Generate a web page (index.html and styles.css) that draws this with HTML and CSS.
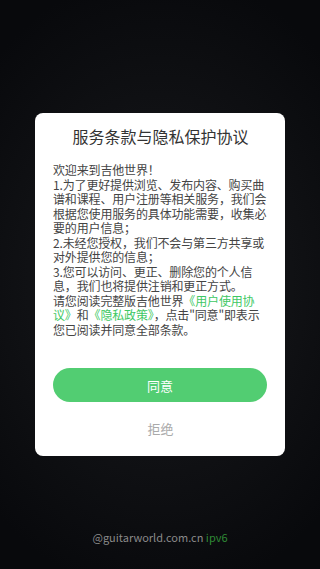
FILE: index.html
```html
<!DOCTYPE html>
<html lang="zh">

<head>
    <meta charset="UTF-8">
    <meta name="viewport" content="width=device-width, initial-scale=1.0">
    <title>吉他世界</title>
    <link rel="stylesheet" href="styles.css">
</head>

<body>
    <div class="page">
        <!-- 协议弹窗 -->
        <div class="dialog">
            <h2 class="dialog-title">服务条款与隐私保护协议</h2>
            <div class="dialog-text">
                <p>欢迎来到吉他世界！</p>
                <p>1.为了更好提供浏览、发布内容、购买曲谱和课程、用户注册等相关服务，我们会根据您使用服务的具体功能需要，收集必要的用户信息；</p>
                <p>2.未经您授权，我们不会与第三方共享或对外提供您的信息；</p>
                <p>3.您可以访问、更正、删除您的个人信息，我们也将提供注销和更正方式。</p>
                <p>请您阅读完整版吉他世界<a href="#" class="link">《用户使用协议》</a>和<a href="#" class="link">《隐私政策》</a>，点击"同意"即表示您已阅读并同意全部条款。</p>
            </div>
            <button class="btn-agree">同意</button>
            <button class="btn-refuse">拒绝</button>
        </div>
    </div>
    <footer class="footer">
        @guitarworld.com.cn <span class="ipv6">ipv6</span>
    </footer>
</body>

</html>
```

FILE: styles.css
```css
/* 页面背景 */

html,
body {
    margin: 0;
    padding: 0;
    height: 100%;
}

body {
    font-family: "Noto Sans CJK SC", "Noto Sans", sans-serif;
    background: radial-gradient(ellipse 75% 55% at 50% 50%, #18191d 0%, #101114 55%, #08090c 100%);
    color: #333;
}

.page {
    height: 100%;
    display: flex;
    align-items: center;
    justify-content: center;
}
/* 弹窗样式 */

.dialog {
    width: 250px;
    box-sizing: border-box;
    background-color: #fff;
    border-radius: 8px;
    padding: 12px 17px 18px 18px;
    display: flex;
    flex-direction: column;
}

.dialog-title {
    margin: 0;
    font-size: 16px;
    font-weight: normal;
    line-height: 22px;
    text-align: center;
    color: #333;
}

.dialog-text {
    margin-top: 16px;
    font-size: 12px;
    line-height: 14.5px;
    letter-spacing: -0.15px;
    color: #444;
}

.dialog-text p {
    margin: 0;
}

.link {
    color: #3ec863;
    text-decoration: none;
}

.btn-agree {
    margin: 31px 1px 0 0;
    height: 34px;
    border: none;
    border-radius: 17px;
    background-color: #52cd72;
    color: #fff;
    font-family: inherit;
    font-size: 13px;
    cursor: pointer;
}

.btn-refuse {
    margin-top: 16px;
    height: 20px;
    padding: 0;
    border: none;
    background: none;
    color: #aaa;
    font-family: inherit;
    font-size: 13px;
    cursor: pointer;
}
/* 页脚 */

.footer {
    position: absolute;
    left: 0;
    right: 0;
    bottom: 24px;
    text-align: center;
    font-size: 11px;
    color: #8a8a8a;
}

.ipv6 {
    color: #2f8a36;
}
```
